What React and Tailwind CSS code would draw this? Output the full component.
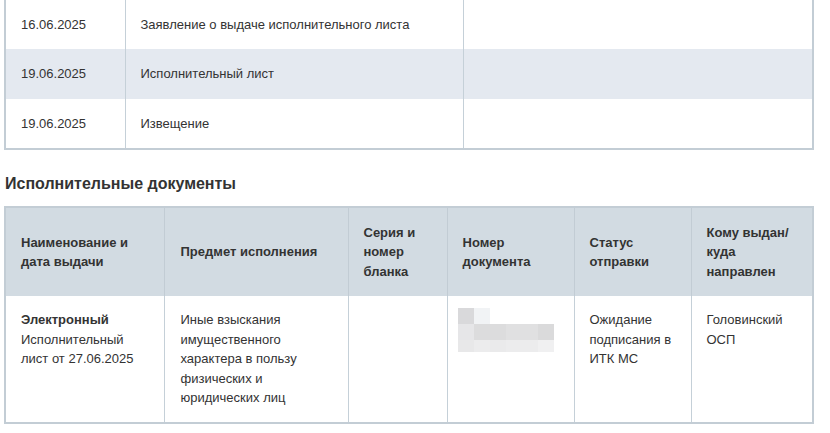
import React from "react";

const events = [
  { date: "16.06.2025", name: "Заявление о выдаче исполнительного листа" },
  { date: "19.06.2025", name: "Исполнительный лист" },
  { date: "19.06.2025", name: "Извещение" },
];

// blurred document number, 6 x 3 blocks
const blurRows = [
  ["bg-[#d9d9db]", "bg-[#f1f3f5]", "bg-white", "bg-white", "bg-white", "bg-white"],
  ["bg-[#e6e6e8]", "bg-[#dcdcdd]", "bg-[#dcdcdd]", "bg-[#e0e0e1]", "bg-[#e0e0e1]", "bg-[#dadadb]"],
  ["bg-[#e8e8e9]", "bg-[#ececed]", "bg-[#eaeaeb]", "bg-[#ececed]", "bg-[#ececed]", "bg-[#f0f0f1]"],
];

const BlurredNumber = () => (
  <div className="-ml-[5px] -mt-[2px] flex flex-col">
    {blurRows.map((row, i) => (
      <div key={i} className={i === 2 ? "flex h-[12px]" : "flex h-[16px]"}>
        {row.map((c, j) => (
          <div key={j} className={"w-[16px] h-full " + c} />
        ))}
      </div>
    ))}
  </div>
);

const App = () => {
  return (
    <div
      className="bg-white min-h-screen text-[13px] leading-[19.5px] text-[#333]"
      style={{ fontFamily: '"Liberation Sans", Arial, sans-serif' }}
    >
      <div className="ml-[4px] w-[810px]">
        {/* Events table */}
        <div className="border-x-2 border-b-2 border-[#c3cdd5]">
          <table className="w-[806px] table-fixed border-collapse">
            <colgroup>
              <col className="w-[119px]" />
              <col className="w-[338px]" />
              <col className="w-[349px]" />
            </colgroup>
            <tbody>
              {events.map((ev, i) => (
                <tr key={i} className={i % 2 === 1 ? "bg-[#e4e9f0]" : "bg-white"}>
                  <td className={"px-[15px] " + (i === 0 ? "h-[49px]" : "h-[49.5px]")}>
                    {ev.date}
                  </td>
                  <td className="px-[15px] border-l border-[#c5d0d8]">{ev.name}</td>
                  <td className="px-[15px] border-l border-[#c5d0d8]"></td>
                </tr>
              ))}
            </tbody>
          </table>
        </div>

        {/* Heading */}
        <h2 className="mt-[24px] mb-[12px] ml-px text-[16px] leading-[20px] font-bold text-[#333]">
          Исполнительные документы
        </h2>

        {/* Documents table */}
        <div className="border-2 border-[#c3cdd5]">
          <table className="w-[806px] table-fixed border-collapse">
            <colgroup>
              <col className="w-[158px]" />
              <col className="w-[184px]" />
              <col className="w-[99px]" />
              <col className="w-[127px]" />
              <col className="w-[117px]" />
              <col className="w-[121px]" />
            </colgroup>
            <thead>
              <tr className="bg-[#d2dbe2] font-bold text-left">
                <th className="px-[15px] py-[14px] h-[88px] align-middle font-bold">
                  Наименование и дата выдачи
                </th>
                <th className="pl-[16px] pr-[15px] py-[14px] align-middle font-bold border-l border-[#c2ccd4]">
                  Предмет исполнения
                </th>
                <th className="px-[15px] py-[14px] align-middle font-bold border-l border-[#c2ccd4]">
                  Серия и номер бланка
                </th>
                <th className="px-[15px] py-[14px] align-middle font-bold border-l border-[#c2ccd4]">
                  Номер документа
                </th>
                <th className="px-[15px] py-[14px] align-middle font-bold border-l border-[#c2ccd4]">
                  Статус отправки
                </th>
                <th className="px-[15px] py-[14px] align-middle font-bold border-l border-[#c2ccd4]">
                  Кому выдан/ куда направлен
                </th>
              </tr>
            </thead>
            <tbody>
              <tr className="align-top">
                <td className="px-[15px] py-[14px]">
                  <div className="font-bold">Электронный</div>
                  <div>Исполнительный лист от 27.06.2025</div>
                </td>
                <td className="pl-[16px] pr-[15px] py-[14px] border-l border-[#c5d0d8]">
                  Иные взыскания имущественного характера в пользу физических и юридических лиц
                </td>
                <td className="px-[15px] py-[14px] border-l border-[#c5d0d8]"></td>
                <td className="px-[15px] py-[14px] border-l border-[#c5d0d8]">
                  <BlurredNumber />
                </td>
                <td className="px-[15px] py-[14px] border-l border-[#c5d0d8]">
                  Ожидание подписания в ИТК МС
                </td>
                <td className="px-[15px] py-[14px] border-l border-[#c5d0d8]">
                  Головинский ОСП
                </td>
              </tr>
            </tbody>
          </table>
        </div>
      </div>
    </div>
  );
};

export default App;
